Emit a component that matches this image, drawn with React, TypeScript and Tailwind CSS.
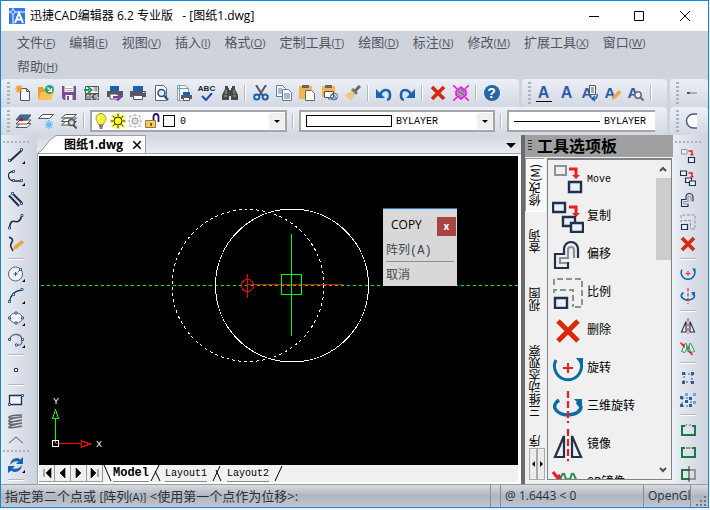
import type { ReactNode } from "react";

const navy = "#22304a";
const blue = "#2a5caa";

// 16x16 toolbar drawings
const glyphs: Record<string, ReactNode> = {
  new: (
    <>
      <path d="M5.5 3.5h6l3 3v9h-9z" fill="#fff" stroke="#555" />
      <path d="M11.5 3.5v3h3" fill="none" stroke="#555" />
      <path d="M4 0v8M0 4h8M1 1l6 6M7 1L1 7" stroke="#f0982c" strokeWidth="1.2" />
    </>
  ),
  open: (
    <>
      <path d="M0 2h5l1 2h5v11H0z" fill="#e8a02c" />
      <path d="M3 7h13l-3 8H0z" fill="#fbc25a" />
      <circle cx="11.500" cy="4.500" r="4.500" fill="#2ba56d" />
      <path d="M9.500 2.500l4 4M13.500 3v3.500H10" fill="none" stroke="#fff" strokeWidth="1.2" />
    </>
  ),
  save: (
    <>
      <path d="M1 1h14v14H3l-2-2z" fill="#7a4b96" />
      <path d="M3.500 1h9v6h-9z" fill="#fff" />
      <path d="M4.500 3.500h7M4.500 5.500h7" stroke="#aaa" />
      <path d="M4.500 10h7v5h-7z" fill="#fff" />
      <path d="M6 11h2v4H6z" fill="#7a4b96" />
    </>
  ),
  acis: (
    <>
      <path d="M1.500 1.500h13v13h-13z" fill="#fff" stroke="#555" />
      <path d="M1 8h14v7H1z" fill="#555" />
      <path d="M3 14v-4h2v4M9 10H7v4h2M11 10v4M14 10h-2v2h2v2h-2" fill="none" stroke="#fff" strokeWidth=".8" />
      <path d="M9 3h5M9 5h5M12 2v5" stroke="#888" />
      <path d="M0 5h5M4 2l3.500 3L4 8" fill="none" stroke="#1d9a5a" strokeWidth="2" />
    </>
  ),
  export: (
    <>
      <path d="M3 1h9v5H3z" fill="#1b62b5" />
      <path d="M0 6h16v6H0z" fill="#565a60" />
      <path d="M3 9h9v5H3z" fill="#fff" stroke="#565a60" />
      <path d="M6 12h6M10 8.500l4 3.500-4 3.500" fill="none" stroke="#7e3fa0" strokeWidth="2" />
    </>
  ),
  print: (
    <>
      <path d="M3 1h10v5H3z" fill="#1b62b5" />
      <path d="M0 6h16v6H0z" fill="#565a60" />
      <path d="M3.500 10.500h9v4h-9z" fill="#fff" stroke="#565a60" />
      <path d="M13 7.500h1.500" stroke="#fff" />
    </>
  ),
  preview: (
    <>
      <path d="M2.500.5h8l3 3v12h-11z" fill="#fff" stroke="#666" />
      <circle cx="8.500" cy="8" r="3.500" fill="#e4edf8" stroke="#1d4e9e" strokeWidth="1.500" />
      <path d="M11 10.500l4 4.500" stroke="#1d4e9e" strokeWidth="2.200" />
    </>
  ),
  pageSetup: (
    <>
      <path d="M1.500.5h8l3 3v12h-11z" fill="#fff" stroke="#999" />
      <path d="M3.500 0v16M1 3.500h12" stroke="#54a7c9" />
      <path d="M7 7h7v3H7z" fill="#1b62b5" />
      <path d="M5 10h11v4H5z" fill="#565a60" />
      <path d="M7.500 12.500h6v3h-6z" fill="#fff" stroke="#565a60" />
    </>
  ),
  binoculars: (
    <>
      <path d="M3 1h3v2h1v2h2V3h1V1h3v3l3 6v5H9v-4H7v4H0v-5l3-6z" fill="#484848" />
      <path d="M2 11h3M11 11h3M4 5v4M12 5v4" stroke="#aaa" />
    </>
  ),
  cut: (
    <>
      <path d="M3 0l7 11M13 0L6 11" stroke="#56585c" strokeWidth="2" />
      <circle cx="3.800" cy="12" r="2.600" fill="none" stroke="#1764b4" strokeWidth="2" />
      <circle cx="12.200" cy="12" r="2.600" fill="none" stroke="#1764b4" strokeWidth="2" />
    </>
  ),
  copyDoc: (
    <>
      <path d="M.5.5h6l3 3v8h-9z" fill="#fff" stroke="#6d7a88" />
      <path d="M2 4h4M2 6h4M2 8h4" stroke="#3f7dc4" />
      <path d="M6.500 4.500h6l3 3v8h-9z" fill="#fff" stroke="#6d7a88" />
      <path d="M8 9h6M8 11h6M8 13h6" stroke="#3f7dc4" />
    </>
  ),
  paste: (
    <>
      <path d="M0 1h13v13H0z" fill="#f5b54c" />
      <path d="M3 0h7v3H3z" fill="#666" />
      <path d="M6.500 5.500h6l3 3v7h-9z" fill="#fff" stroke="#666" />
    </>
  ),
  pasteBlock: (
    <>
      <path d="M0 1h13v11H0z" fill="#f5b54c" />
      <path d="M3 0h7v3H3z" fill="#666" />
      <path d="M2.500 6.500h9v6h-9z" fill="#fff" stroke="#555" />
      <circle cx="12" cy="11.500" r="3.500" fill="none" stroke="#4b6ea8" />
      <path d="M6 14l5-5 4 5z" fill="none" stroke="#4b6ea8" />
    </>
  ),
  brush: (
    <>
      <path d="M0 10l6-4 4 4-4 6z" fill="#f2c580" />
      <path d="M6 5l5 5 2-2-5-5z" fill="#777" />
      <path d="M10 6l5-5" stroke="#666" strokeWidth="3" />
    </>
  ),
  undo: (
    <>
      <path d="M4 10Q6 5 10 5t4 5-3 4.500" fill="none" stroke="#1764b4" strokeWidth="2.600" />
      <path d="M0 4v9h9z" fill="#1764b4" />
    </>
  ),
  redo: (
    <>
      <path d="M12 10Q10 5 6 5t-4 5 3 4.500" fill="none" stroke="#1764b4" strokeWidth="2.600" />
      <path d="M16 4v9H7z" fill="#1764b4" />
    </>
  ),
  cross: <path d="M2 2l12 12M14 2L2 14" stroke="#d9260e" strokeWidth="3.600" />,
  purge: (
    <>
      <path d="M0 0l4 4M16 0l-4 4M0 16l4-4M16 16l-4-4" stroke="#f0f" strokeWidth="1.500" />
      <path d="M8 2l5 4v4l-5 4-5-4V6z" fill="#b68cb8" stroke="#f0f" strokeWidth="1.500" />
      <path d="M5 6l6 4M8 4l3 3" stroke="#666" />
    </>
  ),
  textDoc: (
    <>
      <path d="M7.500.5h6v9h-6z" fill="#fff" stroke="#555" />
      <path d="M9 3h3M9 5h3M9 7h3" stroke="#555" />
      <path d="M15 9q1 5-4 5M13 11l-3 3 3 2" fill="none" stroke="#1764b4" strokeWidth="1.500" />
    </>
  ),
  textPen: <path d="M7 15l1-4 6-6 2.500 2.500-6 6z" fill="#f0a638" />,
  textFind: (
    <>
      <circle cx="10" cy="10" r="3.200" fill="#eef3f8" stroke="#666" strokeWidth="1.500" />
      <path d="M12.500 12.500l3 3" stroke="#666" strokeWidth="2" />
    </>
  ),
  layers: (
    <>
      <path d="M5 10.500h11l-4 4H1z" fill="#fff" stroke="#555" />
      <path d="M5 7h11l-4 4H1z" fill="#fff" stroke="#555" />
      <path d="M5 2h11l-4 5H1z" fill="#3b6ea5" stroke="#3a5a80" />
      <path d="M5 5h3v3H5z" fill="#e00" />
    </>
  ),
  layerFreeze: (
    <>
      <path d="M4.500 1.500h11l-4 4h-11z" fill="#fff" stroke="#555" />
      <path d="M11 7v9M7 11.500h8M8 8.500l6 6M14 8.500l-6 6" stroke="#6bb5f5" strokeWidth="1.200" />
    </>
  ),
  layerFind: (
    <>
      <path d="M4.500 1.500h11l-4 3.500h-11zM4.500 5h11l-4 3.500h-11zM4.500 8.500h11l-4 3.500h-11z" fill="#fff" stroke="#555" />
      <circle cx="10.500" cy="9.500" r="3" fill="#ddd" stroke="#555" strokeWidth="1.500" />
      <path d="M12.500 12l3 3.500" stroke="#555" strokeWidth="2" />
    </>
  ),
  bulb: (
    <>
      <path d="M8 .5a5 5 0 0 1 5 5c0 3-2.500 3.500-2.500 6h-5c0-2.500-2.500-3-2.500-6a5 5 0 0 1 5-5z" fill="#f6f436" stroke="#a09a30" />
      <path d="M6 13h4M6.500 15h3" stroke="#555" strokeWidth="1.500" />
      <path d="M6 3.500q-1 1-1 3" stroke="#fff" fill="none" />
    </>
  ),
  sun: (
    <>
      <path d="M8 0v16M0 8h16M2 2l12 12M14 2L2 14" stroke="#f4f000" strokeWidth="3" />
      <path d="M8 1v14M1 8h14M3 3l10 10M13 3L3 13" stroke="#333" strokeDasharray="2 2" />
      <circle cx="8" cy="8" r="4" fill="#ffff20" stroke="#222" />
    </>
  ),
  frozen: (
    <>
      <path d="M2.500 2.500h11v11h-11z" fill="none" stroke="#bbb" strokeDasharray="1 1" />
      <path d="M8 1v14M1 8h14M3 3l10 10M13 3L3 13" stroke="#aaa" strokeDasharray="2 1" />
      <circle cx="8" cy="8" r="3" fill="#ddd" stroke="#aaa" />
    </>
  ),
  unlocked: (
    <>
      <path d="M9.500 7V4q0-3 2.500-3t2.500 3v5" fill="none" stroke="#1a1a7a" strokeWidth="1.800" />
      <path d="M1.500 7.500h10v7h-10z" fill="#f0cb6c" stroke="#a07828" />
      <path d="M6 10h2v3H6z" fill="#86601c" />
    </>
  ),
  line: (
    <>
      <path d="M2 13L14 2" stroke={navy} strokeWidth="2" />
      <path d="M.5 11.500h2v2h-2zM12.500.5h2v2h-2z" fill="#fff" stroke={blue} />
    </>
  ),
  polyline: (
    <>
      <path d="M5 1.500Q0 2 .5 6t5 5h9" fill="none" stroke={navy} strokeWidth="1.300" />
      <path d="M4.500.5h2v2h-2zM4.500 9.500h2v2h-2zM12.500 9.500h2v2h-2z" fill="#fff" stroke={blue} />
    </>
  ),
  multiline: (
    <>
      <path d="M5 2l9 9M1 3.500L11 14" stroke={navy} strokeWidth="2" />
      <path d="M3.500.5h2v2h-2zM12.500 10.500h2v2h-2z" fill="#fff" stroke={blue} />
    </>
  ),
  spline: (
    <>
      <path d="M1.500 14Q2 6 7 7.500T14 1" fill="none" stroke={navy} strokeWidth="1.700" />
      <path d="M.5 13h2v2h-2zM13 .5h2v2h-2z" fill="#fff" stroke={blue} />
    </>
  ),
  sketch: (
    <>
      <path d="M1 1q5 2 3 5t-1 5 2 4" fill="none" stroke={navy} strokeWidth="1.600" />
      <path d="M5 14l1-4 8-6 2 2.500-7 6z" fill="#eba43c" />
    </>
  ),
  circle: (
    <>
      <circle cx="7.500" cy="8" r="7" fill="#eef4fb" stroke="#56657a" />
      <path d="M8 8l5-5" stroke={blue} strokeDasharray="2 1" />
      <path d="M7.500 6v4M5.500 8h4" stroke={blue} />
      <path d="M11.500 2.500h2v2h-2z" fill="#fff" stroke={blue} />
    </>
  ),
  arc: (
    <>
      <path d="M1.500 14Q3 3 14 2" fill="none" stroke={navy} strokeWidth="1.300" />
      <path d="M.5 12.500h2v2h-2zM4.500 5.500h2v2h-2zM13 .5h2v2h-2z" fill="#fff" stroke={blue} />
    </>
  ),
  ellipse: (
    <>
      <ellipse cx="8" cy="8" rx="6.500" ry="5" fill="#eef4fb" stroke="#56657a" />
      <path d="M.5 7h2v2h-2zM13.500 7h2v2h-2zM7 2h2v2H7zM7 12h2v2H7z" fill="#fff" stroke={blue} />
    </>
  ),
  ellipseArc: (
    <>
      <path d="M1.500 7Q4 2 9 2.500t5 6-5 4.500" fill="none" stroke="#56657a" strokeWidth="1.300" />
      <path d="M.5 6.500h2v2h-2zM13.500 6.500h2v2h-2zM7.500 12h2v2h-2z" fill="#fff" stroke={blue} />
    </>
  ),
  point: <path d="M6.500 6.500h3v3h-3z" fill="#fff" stroke={navy} />,
  rect: (
    <>
      <path d="M1.500 3.500h12v9h-12z" fill="#eef4fb" stroke={navy} strokeWidth="1.300" />
      <path d="M.5 11.500h2v2h-2zM13.500 2.500h2v2h-2z" fill="#fff" stroke={blue} />
    </>
  ),
  helix: (
    <path d="M14 1Q3 1 1 3t13 0Q3 4 1 6.500T14 6Q3 7.500 1 9.500T14 9Q3 11 1 13t13-1" fill="none" stroke="#666a70" strokeWidth="1.400" />
  ),
  refresh: (
    <path d="M15 0v7H8l2.500-2.500Q6 3 2 8 3 1 9 1q2 0 3.500 1.500zM0 16V9h7l-2.500 2.500Q10 13 14 8q-1 7-7 7-2 0-3.500-1.500z" fill="#1764b4" />
  ),
  group: (
    <>
      <path d="M4 4h8v8H4z" fill="none" stroke="#555" strokeDasharray="2 2" />
      <path d="M2 2h3v3H2zM11 2h3v3h-3zM2 11h3v3H2zM11 11h3v3h-3z" fill="#1764b4" />
    </>
  ),
  ungroup: (
    <>
      <path d="M5 1h3v3H5zM13 1h3v3h-3zM13 9h3v3h-3z" fill="#74a3d4" />
      <path d="M2 6h9v8H2z" fill="none" stroke="#555" strokeDasharray="2 2" />
      <path d="M0 4h3v3H0zM9 5h3v3H9zM0 12h3v3H0zM9 12h3v3H9zM5 8h3v3H5z" fill="#1764b4" />
    </>
  ),
  breakGap: (
    <>
      <path d="M5 4H2v9h13V4h-3" fill="none" stroke="#1b7a42" strokeWidth="2" />
      <path d="M5 4l2-2M9 4l2-2" stroke="#999" strokeWidth="1.500" />
    </>
  ),
  breakAt: (
    <>
      <path d="M5 4H2v9h13V4h-3" fill="none" stroke="#1b7a42" strokeWidth="2" />
      <path d="M6 4h5" stroke="#999" strokeWidth="2" />
    </>
  ),
  split: (
    <>
      <path d="M9 4H2v9h7" fill="none" stroke="#1b7a42" strokeWidth="2" />
      <path d="M9 4h6v9H9" fill="none" stroke="#999" strokeWidth="2" />
      <path d="M9 0v16" stroke="#333" />
    </>
  ),
  leader: (
    <>
      <path d="M3 8h10" stroke="#777" />
      <path d="M3 7h3v2H3z" fill="#555" />
    </>
  ),
  arcCut: (
    <>
      <path d="M13 1H9a7 7 0 0 0 0 14h4z" fill="#fff" />
      <path d="M13 1H9.500a7 7 0 0 0 0 14H13" fill="none" stroke="#4b5c78" strokeWidth="1.500" />
    </>
  ),
};

const arrow = (
  <>
    <path d="M17 6h7v7" fill="none" stroke="#ec1c24" strokeWidth="3" />
    <path d="M20 12h8l-4 4z" fill="#ec1c24" />
  </>
);

// 32x32 modify drawings, shared by the palette and the right toolbar
const modify: Record<string, ReactNode> = {
  move: (
    <>
      <path d="M3 3h11v9H3z" fill="#f0f0f0" stroke="#8f9295" strokeWidth="2" />
      {arrow}
      <path d="M17 19h12v10H17z" fill="#e8f1fa" stroke={navy} strokeWidth="2.400" />
    </>
  ),
  copy: (
    <>
      <path d="M1 2h12v9H1z" fill="#e8f1fa" stroke={navy} strokeWidth="2.400" />
      {arrow}
      <path d="M11 16h12v9H11z" fill="#e8f1fa" stroke={navy} strokeWidth="2.400" />
      <path d="M19 22h12v9H19z" fill="#e8f1fa" stroke={navy} strokeWidth="2.400" />
    </>
  ),
  offset: (
    <>
      <path d="M26 19v-9a7 7 0 0 0-14 0v5H3v14h13v-6" fill="none" stroke={navy} strokeWidth="2.200" />
      <path d="M22 19v-8a3 3 0 0 0-6 0v8H8v5h7" fill="none" stroke="#8f9295" strokeWidth="2.200" />
    </>
  ),
  scale: (
    <>
      <path d="M2 8V2h28v28h-8M2 16v-3h19v17" fill="none" stroke="#8f9295" strokeWidth="2" strokeDasharray="6 3" />
      <path d="M3 21h12v10H3z" fill="#e8f1fa" stroke={navy} strokeWidth="2.400" />
    </>
  ),
  erase: <path d="M6 6l20 20M26 6L6 26" stroke="#da2808" strokeWidth="5" />,
  rotate: (
    <>
      <path d="M4 7a13.500 13.500 0 1 0 24 0" fill="none" stroke="#0a6ba4" strokeWidth="3" />
      <path d="M24 5h7v9z" fill="#0a6ba4" />
      <path d="M16 10v10M11 15h10" stroke="#ec1c24" strokeWidth="2" />
    </>
  ),
  rotate3d: (
    <>
      <path d="M7 9Q0 14 4 19t12 5q12-1 13-8l-4-5" fill="none" stroke="#0a6ba4" strokeWidth="3.500" />
      <path d="M22 8h8v8z" fill="#0a6ba4" />
      <path d="M16 0v32" stroke="#ec1c24" strokeWidth="2.200" strokeDasharray="7 3" />
    </>
  ),
  mirror: (
    <>
      <path d="M12 7v21H3zM20 7v21h9z" fill="#e8f1fa" stroke={navy} strokeWidth="2.200" />
      <path d="M16 0v32" stroke="#ec1c24" strokeWidth="2.200" strokeDasharray="7 3" />
    </>
  ),
  mirror3d: (
    <>
      <path d="M11 6L3 23l7 2 5-14M21 6l8 17-7 2-5-14M12 6l5 17M20 6l-5 17" fill="#e9f4ed" stroke="#2f8f5b" strokeWidth="2" />
      <path d="M1 5l4 5 2-1 2 6M17 22l8 8" fill="none" stroke="#ec1c24" strokeWidth="3" />
    </>
  ),
};

function Glyph({ name }: { name: string }) {
  if (name === "spell") {
    return (
      <span className="relative block size-4 font-['Liberation_Sans'] text-[8px] leading-2 font-bold text-[#222]">
        <span className="flex justify-center">ABC</span>
        <svg viewBox="0 0 16 8" className="block h-2 w-4">
          <path d="M3 3l4 4 6-7" fill="none" stroke="#1450a8" strokeWidth="2" />
        </svg>
      </span>
    );
  }
  if (name === "help") {
    return (
      <span className="flex size-4 items-center justify-center rounded-full bg-[#2566a6] font-['Liberation_Sans'] text-[14px] font-bold text-white">?</span>
    );
  }
  if (name.startsWith("text")) {
    return (
      <span className="relative block size-4 text-center font-['Liberation_Sans'] text-[16px] leading-4 font-bold text-[#2b5ba8]">
        <span className={name === "textUnder" ? "block border-b border-black" : name === "textPlain" ? "block" : "block text-left text-[15px]"}>A</span>
        {glyphs[name] && (
          <svg viewBox="0 0 16 16" className="absolute inset-0 size-4 overflow-visible">{glyphs[name]}</svg>
        )}
      </span>
    );
  }
  return modify[name] ? (
    <svg viewBox="0 0 32 32" className="size-4">{modify[name]}</svg>
  ) : (
    <svg viewBox="0 0 16 16" className="size-4">{glyphs[name]}</svg>
  );
}

function Tool({ name, flyout }: { name: string; flyout?: boolean }) {
  return (
    <button type="button" aria-label={name} className="relative flex h-[22px] w-[23px] shrink-0 items-center justify-center">
      <Glyph name={name} />
      {flyout && (
        <svg viewBox="0 0 3 3" className="absolute right-[3px] bottom-[3px] size-[3px]">
          <path d="M3 0v3H0z" />
        </svg>
      )}
    </button>
  );
}

function Tools({ names, vertical }: { names: string; vertical?: boolean }) {
  return names.split(" ").map((n, i) =>
    n === "|" ? (
      <span key={i} className={vertical ? "flex h-2 w-4 shrink-0 items-center" : "flex h-4 w-2 shrink-0 justify-center"}>
        <span className={vertical ? "h-[2px] w-full border-b border-white bg-[#b4b7be]" : "h-full w-[2px] border-r border-white bg-[#b4b7be]"} />
      </span>
    ) : (
      <Tool key={i} name={n.replace("*", "")} flyout={n.endsWith("*")} />
    ),
  );
}

function Grip({ vertical }: { vertical?: boolean }) {
  return vertical ? (
    <span className="mt-1 mb-[2px] h-[2px] w-[26px] shrink-0 bg-[repeating-linear-gradient(90deg,#aeb2bb_0_2px,transparent_2px_4px)]" />
  ) : (
    <span className="mr-px ml-[6px] h-[22px] w-[3px] shrink-0 bg-[repeating-linear-gradient(180deg,#aeb2bb_0_2px,transparent_2px_4px)]" />
  );
}

const bar = "flex h-7 items-center overflow-hidden rounded-sm bg-linear-to-b from-[#eceff6] to-[#d3d8e2]";
const sideBar = "flex shrink-0 flex-col items-center overflow-hidden bg-linear-to-r from-[#e9edf5] to-[#cdd2dd] pt-[2px] pr-[6px]";
const mono = "font-['Liberation_Mono','Noto_Sans_CJK_SC',monospace]";

function Combo({ label, value, className, children }: { label: string; value: string; className: string; children: ReactNode }) {
  return (
    <label className={`relative flex h-[22px] items-center border-2 border-[#a4a6aa] bg-white ${className}`}>
      {children}
      <select aria-label={label} className={`min-w-0 flex-1 appearance-none bg-transparent text-[10px] text-black outline-none ${mono}`}>
        <option>{value}</option>
      </select>
      <span className="flex h-4 w-4 shrink-0 items-center justify-center bg-[#f0f0f0]">
        <svg viewBox="0 0 6 3" className="h-[3px] w-[6px]"><path d="M0 0h6L3 3z" /></svg>
      </span>
    </label>
  );
}

const menus = [
  ["文件", "F"], ["编辑", "E"], ["视图", "V"], ["插入", "I"], ["格式", "O"], ["定制工具", "T"],
  ["绘图", "D"], ["标注", "N"], ["修改", "M"], ["扩展工具", "X"], ["窗口", "W"], ["帮助", "H"],
];

function TitleBar() {
  return (
    <header className="flex h-[30px] shrink-0 items-center bg-white pl-2">
      <svg viewBox="0 0 16 16" className="mr-[5px] size-4">
        <path d="M0 0h16v16H0z" fill="#3477e8" />
        <path d="M0 4h16M4 0v16" stroke="#fff" />
        <path d="M4 1.500L6.500 4 4 6.500 1.500 4z" fill="#3477e8" stroke="#fff" />
        <path d="M6 15l4-10 4 10M7.500 11.500h5" fill="none" stroke="#fff" strokeWidth="2" />
      </svg>
      <h1 className="flex-1 text-[12px] whitespace-pre text-black">迅捷CAD编辑器 6.2 专业版   - [图纸1.dwg]</h1>
      <div className="flex text-black">
        <button type="button" aria-label="最小化" className="flex w-[45px] items-center justify-center">
          <svg viewBox="0 0 10 10" className="size-[10px]"><path d="M0 5.500h10" stroke="currentColor" /></svg>
        </button>
        <button type="button" aria-label="最大化" className="flex w-[45px] items-center justify-center">
          <svg viewBox="0 0 10 10" className="size-[10px]"><path d="M.5.5h9v9h-9z" fill="none" stroke="currentColor" /></svg>
        </button>
        <button type="button" aria-label="关闭" className="flex w-[47px] items-center justify-center">
          <svg viewBox="0 0 10 10" className="size-[10px]"><path d="M0 0l10 10M10 0L0 10" stroke="currentColor" /></svg>
        </button>
      </div>
    </header>
  );
}

function LeftTools() {
  return (
    <aside className={`${sideBar} w-9`}>
      <Grip vertical />
      <Tools vertical names="line* polyline* multiline spline sketch | circle* arc* ellipse* ellipseArc* | point | rect helix" />
      <button type="button" aria-label="更多" className="flex h-[13px] w-6 shrink-0 items-center justify-center">
        <svg viewBox="0 0 16 8" className="h-2 w-4"><path d="M1 7l7-6 7 6" fill="none" stroke="#555" /></svg>
      </button>
      <Grip vertical />
      <Tools vertical names="refresh* |" />
    </aside>
  );
}

function LayoutNav() {
  return (
    <div className="flex h-[17px] shrink-0 items-stretch bg-[#f0f0f0]">
      {["M3 1v8M10 0L5 5l5 5z", "M8 0L3 5l5 5z", "M3 0l5 5-5 5z", "M9 1v8M2 0l5 5-5 5z"].map((d, i) => (
        <button key={i} type="button" aria-label={["第一个", "上一个", "下一个", "最后一个"][i]} className="flex w-4 items-center justify-center border-r border-b border-[#9a9a9a]">
          <svg viewBox="0 0 12 10" className="h-[10px] w-3"><path d={d} stroke="#000" strokeWidth=".6" /></svg>
        </button>
      ))}
      <div className={`flex items-stretch text-[10px] text-black ${mono}`}>
        <svg viewBox="0 0 10 17" className="w-[10px] bg-linear-to-r from-[#f0f0f0] to-white"><path d="M1 0l7 16" stroke="#000" /></svg>
        <button type="button" className="border-b border-[#888] bg-white text-[12px] leading-4 font-bold">Model</button>
        <svg viewBox="0 0 16 17" className="w-4"><path d="M2 17L10 0H0v17z" fill="#fff" /><path d="M10 0L2 16M6 6l5 10" stroke="#000" /></svg>
        <button type="button" className="border-b border-[#888]">Layout1</button>
        <svg viewBox="0 0 20 17" className="w-5"><path d="M13 1L6 16M9 5l5 11" stroke="#000" /></svg>
        <button type="button" className="border-b border-[#888]">Layout2</button>
        <svg viewBox="0 0 16 17" className="w-4"><path d="M13 1L6 16" stroke="#000" /></svg>
      </div>
    </div>
  );
}

function Drawing() {
  return (
    <div className="relative min-h-0 flex-1 overflow-hidden bg-black">
      <svg className="absolute inset-0 size-full" fill="none" shapeRendering="crispEdges">
        <line x1="2" y1="129.500" x2="100%" y2="129.500" stroke="#0f0" strokeDasharray="3 3" />
        <circle cx="209" cy="129.500" r="76" stroke="#fff" strokeDasharray="3 3" />
        <circle cx="253" cy="129.500" r="76.500" stroke="#fff" />
        <path d="M208 128.500h96M208.500 118v24" stroke="#f00" />
        <circle cx="208.500" cy="129.500" r="6" stroke="#f00" />
        <path d="M252.500 78v102M242.500 118.500h20v20h-20z" stroke="#0f0" />
      </svg>
      <svg viewBox="0 0 60 70" className="absolute bottom-3 left-3 h-[70px] w-[60px]" fill="none" shapeRendering="crispEdges">
        <path d="M4.500 60V35M1.500 35h6l-3-8z" stroke="#0f0" />
        <path d="M5 60.500h26M30.500 58v6l9-3z" stroke="#f00" />
        <path d="M1.500 57.500h6v6h-6z" stroke="#fff" />
        <text x="2" y="21" fill="#fff" className="font-['Liberation_Sans'] text-[9px]">Y</text>
        <text x="45" y="64" fill="#fff" className="font-['Liberation_Sans'] text-[9px]">X</text>
      </svg>
      {/* command menu floating over the model */}
      <div className="absolute top-[52px] left-[344px] w-[74px] border-t border-[#2373b8] bg-[#d8d8d8] text-[#404850]">
        <div className="flex h-8 items-center justify-between pr-px pl-2">
          <span className="text-[12px] text-black">COPY</span>
          <button type="button" aria-label="关闭" className="mt-[2px] flex size-[19px] items-center justify-center bg-[#a84444] text-[10px] font-bold text-white">x</button>
        </div>
        <button type="button" className={`block h-5 w-full pl-[3px] text-left text-[12px] leading-5 ${mono}`}>
          阵列(A)
        </button>
        <hr className="mx-[3px] border-[#8d9299]" />
        <button type="button" className={`block w-full pt-1 pl-[3px] text-left text-[12px] leading-5 ${mono}`}>取消</button>
      </div>
    </div>
  );
}

const items = [
  ["move", "Move"], ["copy", "复制"], ["offset", "偏移"], ["scale", "比例"], ["erase", "删除"],
  ["rotate", "旋转"], ["rotate3d", "三维旋转"], ["mirror", "镜像"], ["mirror3d", "3D镜像"],
];

function Palette() {
  return (
    <section className="flex w-[152px] shrink-0 flex-col border-l-4 border-[#6b6b6b] bg-[#f0f0f0]">
      <h2 className="flex h-[22px] shrink-0 items-center bg-[#a0a0a0] pl-[3px] text-[16px] font-bold text-black">
        <span className="mr-[5px] h-3 w-1 bg-[repeating-linear-gradient(180deg,#333_0_1px,transparent_1px_3px)]" />
        工具选项板
      </h2>
      <div className="flex min-h-0 flex-1 pt-px pr-px pb-1">
        <div role="tablist" className="flex w-[22px] shrink-0 flex-col font-['Noto_Sans_CJK_SC',sans-serif] text-[12px] leading-5 text-black">
          {[["修改(M)", "h-[54px] border border-[#999] border-r-white border-b-white bg-[#f8f8f8]"], ["查询", "h-[58px]"], ["视图", "h-[58px]"], ["三维动态观察", "h-[106px]"]].map(([t, c]) => (
            <button key={t} type="button" role="tab" className={`flex w-5 shrink-0 items-center justify-center ${c}`}>
              <span className="rotate-180 [writing-mode:vertical-rl]">{t}</span>
            </button>
          ))}
          <button type="button" role="tab" className="flex min-h-0 w-5 flex-1 items-center justify-center overflow-hidden">
            <span className="rotate-180 [writing-mode:vertical-rl]">序</span>
          </button>
          <div className="flex h-8 shrink-0 pl-1">
            {["M5 2L2 5l3 3z", "M2 2l3 3-3 3z"].map((d, i) => (
              <button key={d} type="button" aria-label={i ? "下一页" : "上一页"} className="flex w-2 items-center justify-center border border-[#aaa] bg-[#ececec]">
                <svg viewBox="0 0 7 10" className="h-[10px] w-[7px] shrink-0"><path d={d} /></svg>
              </button>
            ))}
          </div>
        </div>
        <div className="flex min-w-0 flex-1 border border-t-2 border-[#7c828c]">
          <ul className={`min-w-0 flex-1 overflow-hidden text-[12px] text-black ${mono}`}>
            {items.map(([icon, label]) => (
              <li key={icon}>
                <button type="button" className="flex h-[38px] items-center gap-[3px] pl-1 whitespace-nowrap">
                  <svg viewBox="0 0 32 32" className="size-8">{modify[icon]}</svg>
                  <span className={label === "Move" ? "text-[10px]" : ""}>{label}</span>
                </button>
              </li>
            ))}
          </ul>
          <div className="flex w-4 shrink-0 flex-col items-center">
            <svg viewBox="0 0 8 8" className="my-[5px] size-2"><path d="M1 6l3-3 3 3" fill="none" stroke="#505050" strokeWidth="2" /></svg>
            <div className="h-[82px] w-[15px] bg-[#cdcdcd]" />
            <svg viewBox="0 0 8 8" className="mt-auto mb-[5px] size-2"><path d="M1 2l3 3 3-3" fill="none" stroke="#505050" strokeWidth="2" /></svg>
          </div>
        </div>
      </div>
    </section>
  );
}

export default function App() {
  return (
    <div className="h-screen w-full bg-[#eef3f8] pr-px pb-[2px] font-['Open_Sans','Noto_Sans_CJK_SC',sans-serif]">
      <div className="flex h-full flex-col border border-[#1883d7] bg-[#cfd3dc]">
        <TitleBar />
        <nav className="flex shrink-0 flex-wrap gap-x-[14px] pr-12 pl-4 text-[13px] text-[#50555e]">
          {menus.map(([label, key]) => (
            <button key={key} type="button" className="flex h-6 items-center whitespace-nowrap">
              {label}
              <span className="text-[11px]">(<u>{key}</u>)</span>
            </button>
          ))}
        </nav>

        <div className="flex shrink-0 gap-[3px]">
          <div className={`${bar} flex-1`}>
            <Grip />
            <Tools names="new open save acis export print preview pageSetup spell binoculars | cut copyDoc paste pasteBlock brush | undo redo | cross purge | help" />
          </div>
          <div className={`${bar} w-[145px]`}>
            <Grip />
            <Tools names="textUnder textPlain textDoc textPen textFind |" />
          </div>
          <div className={`${bar} w-[38px]`}>
            <Grip />
            <Tools names="leader" />
          </div>
        </div>

        <div className="flex shrink-0 gap-[3px]">
          <div className={`${bar} flex-1`}>
            <Grip />
            <Tools names="layers layerFreeze layerFind |" />
            <Combo label="图层" value="0" className="ml-[2px] w-[197px] shrink-0 gap-px pl-px">
              {["bulb", "sun", "frozen", "unlocked"].map((n) => (
                <Glyph key={n} name={n} />
              ))}
              <span className="mr-1 ml-[2px] size-3 border border-black" />
            </Combo>
            <span className="mx-[5px] h-4 w-[2px] shrink-0 border-r border-white bg-[#b4b7be]" />
            <Combo label="颜色" value="BYLAYER" className="w-[196px] shrink-0 gap-1 pl-[5px]">
              <span className="h-3 w-[86px] border border-black" />
            </Combo>
            <span className="mx-[5px] h-4 w-[2px] shrink-0 border-r border-white bg-[#b4b7be]" />
            <label className={`mr-3 flex h-[22px] min-w-0 flex-1 items-center gap-1 border-2 border-r-0 border-[#a4a6aa] bg-white pl-[5px] ${mono}`}>
              <span className="h-px w-[86px] shrink-0 bg-black" />
              <select aria-label="线型" className="min-w-0 flex-1 appearance-none bg-transparent text-[10px] text-black outline-none">
                <option>BYLAYER</option>
              </select>
            </label>
          </div>
          <div className={`${bar} w-[38px]`}>
            <Grip />
            <Tools names="arcCut" />
          </div>
        </div>

        <div className="flex min-h-0 flex-1">
          <LeftTools />
          <main className="flex min-w-0 flex-1 flex-col">
            <div className="flex h-[18px] shrink-0 items-end bg-linear-to-b from-[#d3d7df] to-[#e8ebf2]">
              <svg viewBox="0 0 22 18" className="ml-px h-[18px] w-[22px]">
                <path d="M0 18Q4 16 8 10T18 1h4v17z" fill="#fff" />
                <path d="M0 18Q4 16 8 10T18 .5h4" fill="none" stroke="#9a9ea6" />
              </svg>
              <div className="flex h-full items-center border-t border-r border-[#9a9ea6] bg-white pr-1 pl-1">
                <button type="button" className="text-[12px] leading-4 font-bold text-black">图纸1.dwg</button>
                <button type="button" aria-label="关闭图纸" className="ml-[10px]">
                  <svg viewBox="0 0 8 8" className="size-2"><path d="M0 0l8 8M8 0L0 8" stroke="#000" strokeWidth="1.500" /></svg>
                </button>
              </div>
              <button type="button" aria-label="图纸列表" className="mr-[5px] mb-[5px] ml-auto">
                <svg viewBox="0 0 10 5" className="h-[5px] w-[10px]"><path d="M0 0h10L5 5z" /></svg>
              </button>
            </div>
            <div className="flex min-h-0 flex-1 flex-col border-t border-l border-[#a0a4ac] bg-white pt-[2px] pr-[3px] pb-[2px] pl-px">
              <Drawing />
              <LayoutNav />
            </div>
          </main>
          <Palette />
          <aside className={`${sideBar} w-[35px]`}>
            <Grip vertical />
            <Tools vertical names="move copy offset scale cross | rotate rotate3d | mirror mirror3d | group ungroup | breakGap breakAt split" />
          </aside>
        </div>

        <footer className="flex h-[23px] shrink-0 items-stretch border-t border-[#989ca4] bg-linear-to-b from-[#d8dbe0] via-[#b0b5bf] to-[#c2c6ce] text-[12px] leading-[22px] text-[#2b3038]">
          <p className="min-w-0 flex-1 truncate pl-1 text-[13px]">
            指定第二个点或 <span className="text-[12px]">[</span>阵列<span className="text-[11px]">(A)]</span> &lt;使用第一个点作为位移&gt;:
          </p>
          <span className="w-[11px] border-x border-[#888c94]" />
          <span className="w-[143px] border-r border-[#888c94] pl-1">@ 1.6443 &lt; 0</span>
          <span className="w-[47px] overflow-hidden border-r border-[#888c94] pl-1">OpenGl</span>
          <svg viewBox="0 0 17 22" className="w-[17px]">
            <path d="M13 11h2v2h-2zM9 15h2v2H9zM13 15h2v2h-2zM5 19h2v2H5zM9 19h2v2H9zM13 19h2v2h-2z" fill="#6f737b" />
          </svg>
        </footer>
      </div>
    </div>
  );
}
